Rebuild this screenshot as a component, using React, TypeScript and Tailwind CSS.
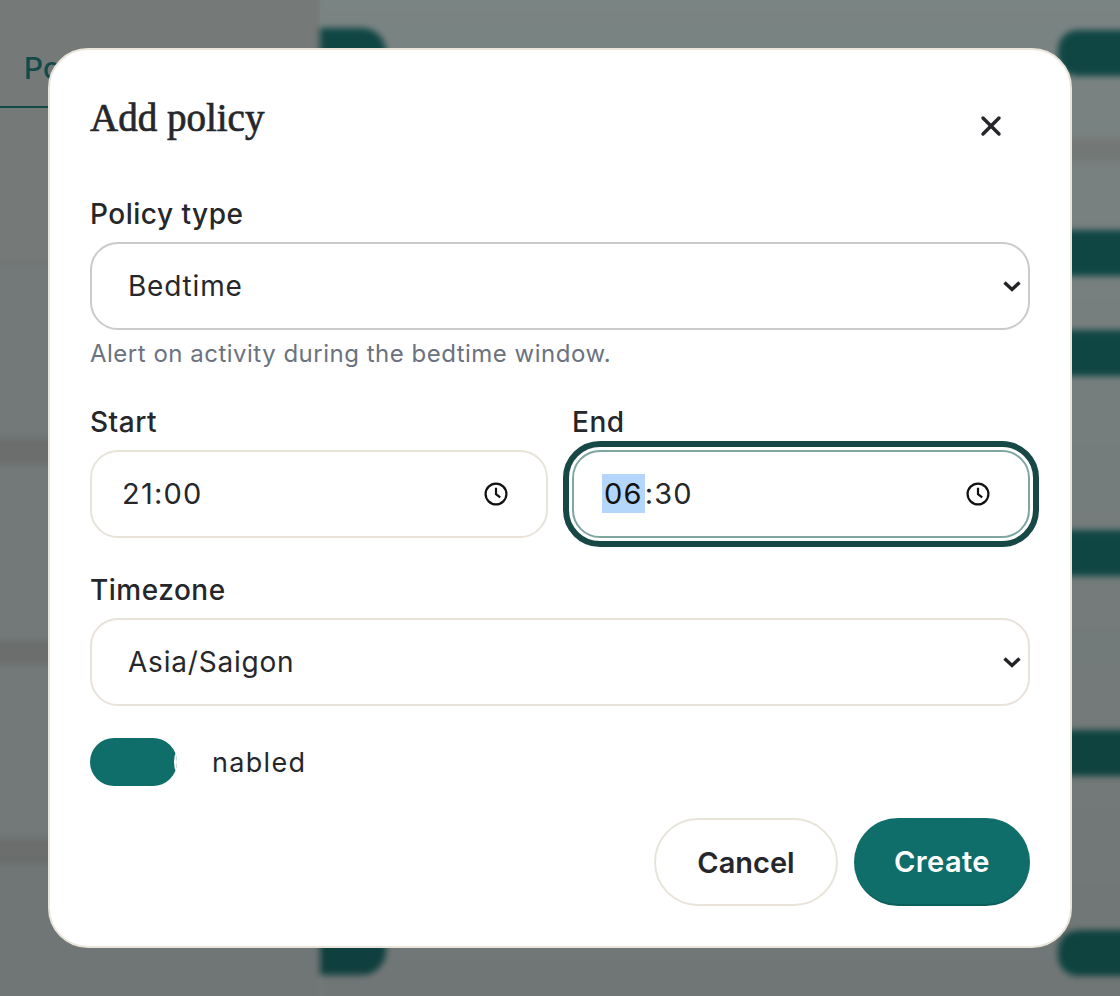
import { X } from 'lucide-react';

const sans = "font-['Inter','Noto_Sans',sans-serif]"
const labelClass = 'mb-[9px] block h-[38px] text-[28px] leading-[38px] font-medium tracking-[0.5px] text-[#26272b]'

function Chevron() {
  return (
    <svg className="pointer-events-none absolute right-[8px] top-1/2 -translate-y-1/2" width="20" height="14" viewBox="0 0 20 14" fill="none">
      <path d="M2.5 3.5 10 10.5 17.5 3.5" stroke="#222326" strokeWidth="3.4" />
    </svg>
  )
}

function ClockIcon() {
  return (
    <svg width="26" height="26" viewBox="0 0 26 26" fill="none" stroke="#111" strokeWidth="2.2">
      <circle cx="13" cy="13" r="10.4" />
      <path d="M13 6.8V13.2L17.2 16.4" />
    </svg>
  )
}

function Field({ label, options, borderClass }: { label: string; options: string[]; borderClass: string }) {
  return (
    <div>
      <label className={labelClass}>{label}</label>
      <div className="relative">
        <select className={`block h-[88px] w-full appearance-none rounded-[28px] border-2 bg-white pl-[36px] text-[28px] tracking-[0.8px] text-[#26272b] ${borderClass}`}>
          {options.map((o) => <option key={o}>{o}</option>)}
        </select>
        <Chevron />
      </div>
    </div>
  )
}

function Backdrop() {
  // oversized by 12px each side so the blur doesn't fade at the window edge
  return (
    <div className="-mx-[12px] -my-[12px] flex h-[1020px] w-[1144px]">
      <div className="flex w-[332px] flex-col bg-[#757978]">
        <div className="h-[120px] border-b-2 border-[#124a48] pl-[36px] pt-[58px] text-[30px] leading-[44px] font-medium text-[#134a48] blur-[0.5px]">Policies</div>
        <div className="flex flex-1 flex-col blur-[3px]">
          <div className="h-[157px] border-b-2 border-[#6c706e]" />
          <div className="h-[173px] bg-[#737979]" />
          <div className="h-[27px] bg-[#6b6e6c]" />
          <div className="h-[175px] bg-[#737979]" />
          <div className="h-[25px] bg-[#6b6e6c]" />
          <div className="h-[173px] bg-[#737979]" />
          <div className="h-[27px] bg-[#6b6e6c]" />
          <div className="flex-1 bg-[#707676]" />
        </div>
      </div>
      <div className="flex flex-1 bg-linear-to-b from-[#7a8483] to-[#707675] blur-[3px]">
        <div className="flex w-[66px] flex-col justify-between pb-[33px] pt-[40px]">
          <div className="h-[60px] rounded-tr-[24px] bg-[#0f4644]" />
          <div className="h-[48px] rounded-br-[24px] bg-[#0f3f3e]" />
        </div>
        <div className="flex-1" />
        <div className="w-[74px] pt-[42px]">
          <div className="h-[46px] rounded-l-[20px] bg-[#0f4644]" />
          <div className="mt-[62px] h-[24px] bg-[#737876]" />
          <div className="mt-[68px] h-[46px] rounded-l-[14px] bg-[#0f4644]" />
          <div className="mt-[54px] h-[46px] bg-[#0f4644]" />
          <div className="mt-[154px] h-[46px] rounded-l-[14px] bg-[#0f4644]" />
          <div className="mt-[154px] h-[46px] rounded-l-[14px] bg-[#0f4340]" />
          <div className="mt-[154px] h-[46px] rounded-l-[20px] bg-[#0f4340]" />
        </div>
      </div>
    </div>
  )
}

export default function App() {
  return (
    <div className={`relative h-[996px] w-[1120px] overflow-hidden bg-[#7a8281] ${sans}`}>
      <Backdrop />
      <div className="absolute left-[48px] top-[48px] h-[900px] w-[1024px] rounded-[40px] border-2 border-[#e9e5da] bg-white px-[40px]">
        <div className="flex h-[145px] items-start justify-between">
          <h2 className="mt-[44px] font-['Liberation_Serif',serif] text-[39px] leading-[48px] text-[#26272b] [-webkit-text-stroke:0.7px_#26272b]">Add policy</h2>
          <button className="mr-[23px] mt-[60px] text-[#26272b]"><X size={32} strokeWidth={2.6} /></button>
        </div>
        <div className="flex flex-col">
          <Field label="Policy type" options={['Bedtime']} borderClass="border-[#cbcbcb]" />
          <p className="mt-[10px] h-[28px] text-[24px] leading-[28px] tracking-[0.5px] text-[#6b7280]">Alert on activity during the bedtime window.</p>
          <div className="mt-[35px] grid grid-cols-2 gap-[24px]">
            <div>
              <label className={labelClass}>Start</label>
              <div className="flex h-[88px] items-center justify-between rounded-[28px] border-2 border-[#e8e4da] pl-[30px] pr-[37px] text-[29px] tracking-[1.2px] text-[#26272b]">
                <span>21:00</span>
                <ClockIcon />
              </div>
            </div>
            <div>
              <label className={labelClass}>End</label>
              <div className="flex h-[88px] items-center justify-between rounded-[28px] border-2 border-[#7fa6a0] pl-[28px] pr-[37px] text-[29px] tracking-[1.2px] text-[#26272b] outline-[6px] outline-offset-[3px] outline-[#174846]">
                <span><span className="bg-[#b4d6fb] px-[2px] py-[2px] text-[#111]">06</span>:30</span>
                <ClockIcon />
              </div>
            </div>
          </div>
          <div className="mt-[33px]">
            <Field label="Timezone" options={['Asia/Saigon']} borderClass="border-[#e8e2da]" />
          </div>
          <div className="mt-[32px] flex h-[48px] items-center">
            <div className="relative h-[48px] w-[87px] overflow-hidden rounded-full bg-[#0f6e69]">
              <div className="absolute left-[84px] top-[-6px] h-[60px] w-[60px] rounded-full bg-white" />
            </div>
            <span className="ml-[35px] pt-[2px] text-[27px] tracking-[1.3px] text-[#26272b]">nabled</span>
          </div>
          <div className="mt-[32px] flex justify-end gap-[16px]">
            <button className="h-[88px] w-[184px] rounded-full border-2 border-[#e8e4da] bg-white pt-[2px] text-[29px] font-semibold text-[#26272b]">Cancel</button>
            <button className="h-[88px] w-[176px] rounded-full border-b-2 border-[#0c5f5b] bg-[#0f6e69] pt-[2px] text-[29px] font-semibold tracking-[0.4px] text-white">Create</button>
          </div>
        </div>
      </div>
    </div>
  )
}
